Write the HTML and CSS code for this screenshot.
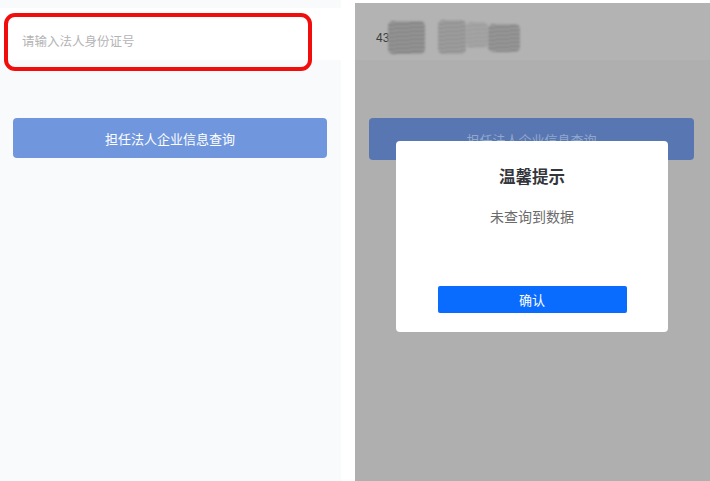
FILE: index.html
```html
<!DOCTYPE html>
<html lang="zh-CN">
<head>
<meta charset="utf-8">
<link rel="stylesheet" href="styles.css">
</head>
<body>
<div class="page">
  <section class="panel panel-left">
    <div class="input-row">
      <span class="placeholder">请输入法人身份证号</span>
      <div class="highlight"></div>
    </div>
    <button class="query-btn">担任法人企业信息查询</button>
  </section>
  <div class="divider"></div>
  <section class="panel panel-right">
    <div class="input-row dim">
      <span class="id-value">43</span>
      <div class="smudge">
        <span class="blot b1"></span>
        <span class="blot b2"></span>
        <span class="blot b3"></span>
        <span class="blot b4"></span>
      </div>
    </div>
    <button class="query-btn dim">担任法人企业信息查询</button>
    <div class="dialog">
      <h2 class="dialog-title">温馨提示</h2>
      <p class="dialog-msg">未查询到数据</p>
      <button class="confirm-btn">确认</button>
    </div>
  </section>
</div>
</body>
</html>
```
FILE: styles.css
```css
* { box-sizing: border-box; }
html, body { margin: 0; padding: 0; background: #ffffff; }
body {
  font-family: "Noto Sans CJK SC", "Noto Sans", "Liberation Sans", sans-serif;
  width: 710px;
  height: 481px;
  overflow: hidden;
}
.page {
  display: flex;
  width: 710px;
  height: 481px;
}
.panel {
  position: relative;
  display: flex;
  flex-direction: column;
}
.panel-left {
  width: 341px;
  background: #f9fafc;
  padding-top: 8px;
}
.divider {
  width: 14px;
  background: #ffffff;
}
.panel-right {
  width: 355px;
  background: #afafaf;
  border-top: 3px solid #ffffff;
}
.input-row {
  position: relative;
  height: 52px;
  background: #ffffff;
  display: flex;
  align-items: center;
  padding-left: 22px;
}
.input-row.dim {
  height: 57px;
  background: #b3b3b3;
  padding-left: 21px;
}
.placeholder {
  font-size: 12.5px;
  color: #b4b4b6;
  margin-top: 13px;
}
.highlight {
  position: absolute;
  left: 4px;
  top: 5px;
  width: 308px;
  height: 58px;
  border: 4px solid #f20d0d;
  border-radius: 11px;
}
.id-value {
  font-family: "Liberation Sans", sans-serif;
  font-size: 12px;
  color: #3c3c3c;
  margin-top: 12px;
}
.smudge {
  position: absolute;
  left: 33px;
  top: 15px;
  width: 135px;
  height: 42px;
}
.blot {
  position: absolute;
  background: repeating-linear-gradient(176deg, #7a7a7a 0 1px, #9a9a9a 1px 3px, #8a8a8a 3px 4px);
  filter: blur(1px);
  border-radius: 5px;
}
.b1 { left: 0; top: 3px; width: 37px; height: 33px; }
.b2 { left: 50px; top: 2px; width: 28px; height: 34px; opacity: 0.7; }
.b3 { left: 78px; top: 4px; width: 22px; height: 26px; opacity: 0.45; }
.b4 { left: 100px; top: 6px; width: 32px; height: 28px; opacity: 0.9; }
.query-btn {
  margin: 58px 0 0 13px;
  width: 314px;
  height: 40px;
  border: none;
  border-radius: 4px;
  background: #7097dd;
  color: #ffffff;
  font-family: inherit;
  font-size: 13px;
  padding: 0;
}
.query-btn.dim {
  margin: 58px 0 0 14px;
  width: 325px;
  height: 42px;
  background: #5877b2;
  color: #93a8cf;
}
.dialog {
  position: absolute;
  left: 41px;
  top: 138px;
  width: 272px;
  height: 191px;
  background: #ffffff;
  border-radius: 4px;
  display: flex;
  flex-direction: column;
  align-items: center;
  padding-top: 25px;
}
.dialog-title {
  margin: 0;
  font-size: 16.5px;
  line-height: 20px;
  font-weight: 700;
  color: #34363c;
}
.dialog-msg {
  margin: 20px 0 0;
  font-size: 14px;
  line-height: 20px;
  color: #6b6b6b;
}
.confirm-btn {
  margin-top: 60px;
  width: 189px;
  height: 27px;
  border: none;
  border-radius: 2px;
  background: #0a6cff;
  color: #ffffff;
  font-family: inherit;
  font-size: 13px;
  padding: 0;
}
```
